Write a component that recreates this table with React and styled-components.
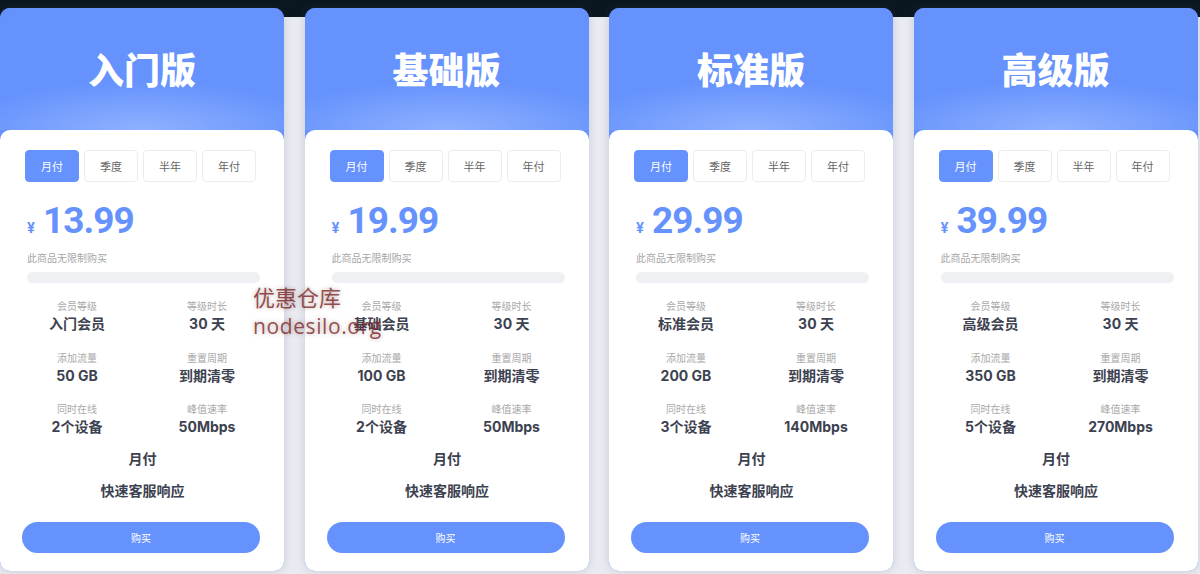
import React from 'react';
import styled, {createGlobalStyle} from 'styled-components';

const plans = [
  {name: '入门版', price: '13.99', level: '入门会员', traffic: '50 GB', devices: '2个设备', speed: '50Mbps'},
  {name: '基础版', price: '19.99', level: '基础会员', traffic: '100 GB', devices: '2个设备', speed: '50Mbps'},
  {name: '标准版', price: '29.99', level: '标准会员', traffic: '200 GB', devices: '3个设备', speed: '140Mbps'},
  {name: '高级版', price: '39.99', level: '高级会员', traffic: '350 GB', devices: '5个设备', speed: '270Mbps'},
];

const periods = ['月付', '季度', '半年', '年付'];

const GlobalStyle = createGlobalStyle`
  html, body {
    margin: 0;
    padding: 0;
  }
  body {
    width: 1200px;
    height: 574px;
    overflow: hidden;
    font-family: Inter, 'Noto Sans CJK SC', sans-serif;
    background: linear-gradient(#0b1720 0, #0b1720 17px, #e9ebf1 17px, #e9ebf1 100%);
  }
`;

export default function App() {
  return (
    <>
      <GlobalStyle />
      <StyledPage>
        {plans.map(plan => (
          <StyledCard key={plan.name}>
            <StyledHeader>
              <StyledTitle>{plan.name}</StyledTitle>
            </StyledHeader>
            <StyledBody>
              <StyledTabs>
                {periods.map((period, i) => (
                  <StyledTab key={period} active={i === 0}>
                    {period}
                  </StyledTab>
                ))}
              </StyledTabs>

              <StyledPrice>
                <StyledCurrency>¥</StyledCurrency>
                <StyledAmount>{plan.price}</StyledAmount>
              </StyledPrice>
              <StyledNote>此商品无限制购买</StyledNote>
              <StyledBar />

              <StyledStats>
                <StyledStat>
                  <StyledLabel>会员等级</StyledLabel>
                  <StyledValue>{plan.level}</StyledValue>
                </StyledStat>
                <StyledStat>
                  <StyledLabel>等级时长</StyledLabel>
                  <StyledValue>30 天</StyledValue>
                </StyledStat>
                <StyledStat>
                  <StyledLabel>添加流量</StyledLabel>
                  <StyledValue>{plan.traffic}</StyledValue>
                </StyledStat>
                <StyledStat>
                  <StyledLabel>重置周期</StyledLabel>
                  <StyledValue>到期清零</StyledValue>
                </StyledStat>
                <StyledStat>
                  <StyledLabel>同时在线</StyledLabel>
                  <StyledValue>{plan.devices}</StyledValue>
                </StyledStat>
                <StyledStat>
                  <StyledLabel>峰值速率</StyledLabel>
                  <StyledValue>{plan.speed}</StyledValue>
                </StyledStat>
              </StyledStats>

              <StyledFeature>月付</StyledFeature>
              <StyledFeature>快速客服响应</StyledFeature>

              <StyledBuy>购买</StyledBuy>
            </StyledBody>
          </StyledCard>
        ))}
      </StyledPage>
      <StyledWatermark>
        <span>优惠仓库</span>
        <span>nodesilo.org</span>
      </StyledWatermark>
    </>
  );
}

const StyledPage = styled.main`
  display: flex;
  gap: 20.5px;
  padding-top: 8px;
`;

const StyledCard = styled.section`
  width: 284px;
  height: 563px;
  flex: none;
  display: flex;
  flex-direction: column;
  background: #6592fd;
  border-radius: 10px;
  overflow: hidden;
  box-shadow: 0 0 9px rgba(60, 70, 110, 0.2);
`;

const StyledHeader = styled.header`
  height: 122px;
  display: flex;
  align-items: center;
  justify-content: center;
  background: radial-gradient(ellipse 65% 40% at 50% 100%, rgba(160, 190, 255, 0.7), rgba(101, 146, 253, 0) 100%),
    #6592fd;
`;

const StyledTitle = styled.h2`
  margin: 0 0 2px;
  color: #fff;
  font-size: 36px;
  font-weight: 900;
  font-family: 'Noto Sans CJK SC', sans-serif;
`;

const StyledBody = styled.div`
  flex: 1;
  background: #fff;
  border-radius: 10px 10px 8px 8px;
  padding: 20px 24px 0 25px;
  display: flex;
  flex-direction: column;
`;

const StyledTabs = styled.div`
  display: flex;
  gap: 5px;
`;

const StyledTab = styled.div`
  width: 54px;
  height: 32px;
  box-sizing: border-box;
  display: flex;
  align-items: center;
  justify-content: center;
  border-radius: 4px;
  font-size: 11px;
  font-family: 'Noto Sans CJK SC', sans-serif;
  color: ${props => (props.active ? '#fff' : '#666')};
  background: ${props => (props.active ? '#6592fd' : '#fff')};
  border: 1px solid ${props => (props.active ? '#6592fd' : '#ececec')};
`;

const StyledPrice = styled.div`
  display: flex;
  align-items: baseline;
  margin-top: 19px;
  padding-left: 2px;
  color: #6592fd;
  height: 40px;
`;

const StyledCurrency = styled.span`
  font-size: 14px;
  font-weight: 700;
  margin-right: 8px;
`;

const StyledAmount = styled.span`
  font-family: Roboto, sans-serif;
  font-size: 37px;
  font-weight: 700;
  letter-spacing: -1px;
  line-height: 40px;
`;

const StyledNote = styled.div`
  margin-top: 9px;
  padding-left: 2px;
  font-size: 10px;
  color: #a6a6a6;
  font-family: 'Noto Sans CJK SC', sans-serif;
`;

const StyledBar = styled.div`
  margin-top: 7px;
  margin-left: 2px;
  height: 11px;
  border-radius: 6px;
  background: #eef0f3;
`;

const StyledStats = styled.div`
  display: grid;
  grid-template-columns: 1fr 1fr;
  margin: 16px -12px 0 -13px;
  row-gap: 16.5px;
`;

const StyledStat = styled.div`
  display: flex;
  flex-direction: column;
  align-items: center;
`;

const StyledLabel = styled.span`
  font-size: 10px;
  color: #a9a9a9;
  line-height: 15px;
`;

const StyledValue = styled.span`
  font-size: 14px;
  font-weight: 700;
  color: #3d4250;
  line-height: 20px;
`;

const StyledFeature = styled.div`
  text-align: center;
  font-size: 14px;
  font-weight: 700;
  color: #3d4250;
  line-height: 24px;
  margin-top: 10px;
  & + & {
    margin-top: 8px;
  }
`;

const StyledBuy = styled.button`
  margin: 19px 0 0 -3px;
  width: 238px;
  height: 31px;
  border: none;
  border-radius: 16px;
  background: #6592fd;
  color: #fff;
  font-size: 10px;
  font-family: 'Noto Sans CJK SC', sans-serif;
`;

const StyledWatermark = styled.div`
  position: absolute;
  z-index: 10;
  left: 253px;
  top: 282px;
  display: flex;
  flex-direction: column;
  gap: 1px;
  color: rgba(125, 45, 45, 0.82);
  font-family: 'Noto Sans CJK SC', sans-serif;
  font-size: 22px;
  line-height: 29px;
  text-shadow: 0 0 4px rgba(110, 40, 40, 0.4);
  pointer-events: none;
  & span:last-child {
    font-family: 'Open Sans', sans-serif;
    font-size: 21px;
    letter-spacing: 0.6px;
  }
`;
